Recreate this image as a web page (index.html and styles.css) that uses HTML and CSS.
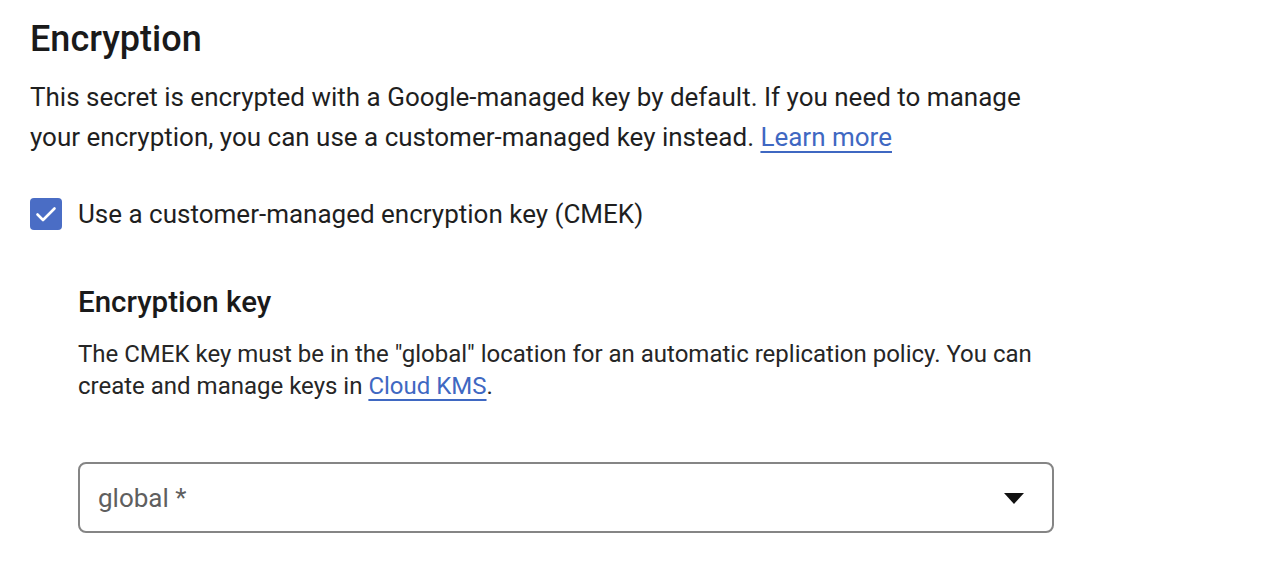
FILE: index.html
```html
<!DOCTYPE html>
<html lang="en">
<head>
<meta charset="utf-8">
<title>Encryption</title>
<link rel="stylesheet" href="styles.css">
</head>
<body>
<section class="encryption">
  <h1 class="title">Encryption</h1>
  <p class="intro">This secret is encrypted with a Google-managed key by default. If you need to manage your encryption, you can use a customer-managed key instead. <a class="link" href="#">Learn more</a></p>
  <label class="check-row">
    <span class="checkbox">
      <svg viewBox="0 0 32 32" width="32" height="32" aria-hidden="true"><path d="M7.5 16.5 L13 22 L24.5 10.5" fill="none" stroke="#fff" stroke-width="2.6" stroke-linecap="round" stroke-linejoin="round"/></svg>
    </span>
    <span class="check-label">Use a customer-managed encryption key (CMEK)</span>
  </label>
  <div class="key-section">
    <h2 class="subtitle">Encryption key</h2>
    <p class="desc">The CMEK key must be in the "global" location for an automatic replication policy. You can create and manage keys in <a class="link" href="#">Cloud KMS</a>.</p>
    <div class="select">
      <span class="select-value">global *</span>
      <span class="select-arrow"></span>
    </div>
  </div>
</section>
</body>
</html>
```
FILE: styles.css
```css
html, body {
  margin: 0;
  padding: 0;
  background: #ffffff;
}
body {
  font-family: Roboto, "Liberation Sans", Arial, sans-serif;
  color: #1f1f1f;
}
.encryption {
  padding-left: 30px;
  display: flex;
  flex-direction: column;
}
.title {
  margin: 17px 0 0;
  font-size: 36px;
  line-height: 44px;
  font-weight: 500;
  color: #1a1a1a;
}
.intro {
  margin: 16px 0 0;
  max-width: 1000px;
  font-size: 26px;
  line-height: 40px;
  color: #1f1f1f;
}
.link {
  color: #3f68c2;
  text-decoration: underline;
  text-decoration-thickness: 2px;
  text-underline-offset: 5px;
}
.check-row {
  margin-top: 41px;
  display: flex;
  align-items: center;
  gap: 16px;
  height: 32px;
}
.checkbox {
  width: 32px;
  height: 32px;
  border-radius: 4px;
  background: #4a6dc5;
  display: flex;
}
.check-label {
  font-size: 26px;
  line-height: 30px;
  color: #1f1f1f;
}
.key-section {
  padding-left: 48px;
  display: flex;
  flex-direction: column;
}
.subtitle {
  margin: 54px 0 0;
  font-size: 29.5px;
  line-height: 36px;
  font-weight: 500;
  color: #1a1a1a;
}
.desc {
  margin: 18px 0 0;
  max-width: 970px;
  font-size: 24px;
  line-height: 32px;
  color: #262626;
}
.select {
  margin-top: 60px;
  width: 976px;
  height: 71px;
  box-sizing: border-box;
  border: 2px solid #858585;
  border-radius: 8px;
  display: flex;
  align-items: center;
  justify-content: space-between;
  padding: 0 28px 0 18px;
}
.select-value {
  font-size: 26px;
  color: #5f5f5f;
}
.select-arrow {
  width: 0;
  height: 0;
  margin-top: 1px;
  border-left: 10px solid transparent;
  border-right: 10px solid transparent;
  border-top: 11px solid #111;
}
```
